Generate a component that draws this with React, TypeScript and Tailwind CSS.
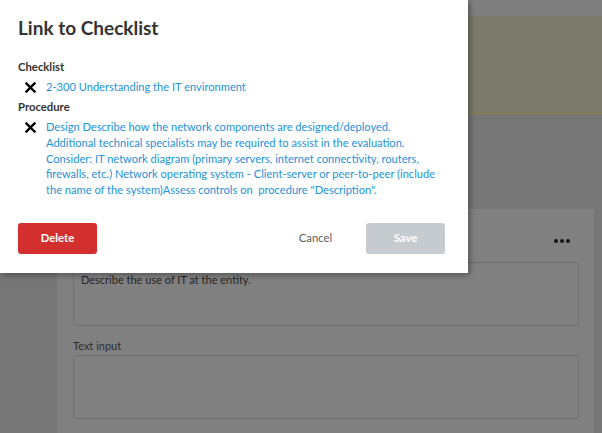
export default function App() {
  return (
    <div className="relative h-[433px] w-[602px] overflow-hidden bg-[#767676] font-['Lato',sans-serif]">
      {/* dimmed page behind the dialog */}
      <div className="h-[16px] bg-[#7f7f7f]" />
      <div className="h-[98px] border-b border-[#8b8142] bg-[#7b7a6c]" />
      <div className="h-[95px]" />
      <div className="ml-[57px] h-[224px] w-[537px] bg-[#808080] pl-[16px] pr-[15px]">
        <div className="flex h-[53px] items-center justify-end pr-[9px] pt-[10px]">
          <div className="flex gap-[2px]">
            <span className="size-[4px] rounded-full bg-[#141414]" />
            <span className="size-[4px] rounded-full bg-[#141414]" />
            <span className="size-[4px] rounded-full bg-[#141414]" />
          </div>
        </div>
        <div className="h-[64px] rounded-[3px] border border-[#6f6f6f] px-[7px] pt-[9px] text-[11px] text-[#262626]">
          Describe the use of IT at the entity.
        </div>
        <div className="pt-[12px] pb-[2px] text-[11px] leading-[15px] text-[#2e2e2e]">Text input</div>
        <div className="h-[64px] rounded-[3px] border border-[#6f6f6f]" />
      </div>

      {/* dialog */}
      <div className="absolute left-0 top-0 h-[273px] w-[468px] bg-white px-[18px] pt-[14px] shadow-[2px_2px_6px_rgba(0,0,0,0.35)]">
        <h2 className="text-[19px] font-bold leading-[28px] text-[#333]">Link to Checklist</h2>
        <div className="mt-[17px] text-[11.3px] font-bold leading-[16px] text-[#333]">Checklist</div>
        <div className="mt-[4px] flex items-start text-[11.1px] leading-[16px]">
          <RemoveIcon />
          <span className="text-[#2592d6]">2-300 Understanding the IT environment</span>
        </div>
        <div className="mt-[4px] text-[11.3px] font-bold leading-[16px] text-[#333]">Procedure</div>
        <div className="mt-[4px] flex items-start text-[11.1px] leading-[15.8px]">
          <RemoveIcon />
          <span className="max-w-[394px] text-[#2592d6]">
            Design Describe how the network components are designed/deployed. Additional technical specialists may be
            required to assist in the evaluation. Consider: IT network diagram (primary servers, internet connectivity,
            routers, firewalls, etc.) Network operating system - Client-server or peer-to-peer (include the name of the
            system)Assess controls on&nbsp; procedure "Description".
          </span>
        </div>
        <div className="mt-[25px] flex items-center">
          <button className="h-[31px] w-[79px] rounded-[3px] bg-[#d32f2f] text-[11.3px] font-bold text-white">
            Delete
          </button>
          <button className="ml-auto mr-[11px] h-[31px] w-[79px] text-[11.3px] text-[#5c5c5c]">Cancel</button>
          <button className="mr-[5px] h-[31px] w-[79px] rounded-[3px] bg-[#c6cbd0] text-[11.3px] font-bold text-white">
            Save
          </button>
        </div>
      </div>
    </div>
  );
}

function RemoveIcon() {
  return (
    <span className="flex h-[16px] w-[28px] shrink-0 items-center pl-[7px]">
      <svg width="11" height="11" viewBox="0 0 11 11">
        <path d="M1.5 1.5 L9.5 9.5 M9.5 1.5 L1.5 9.5" stroke="#000" strokeWidth="2.4" strokeLinecap="square" />
      </svg>
    </span>
  );
}
